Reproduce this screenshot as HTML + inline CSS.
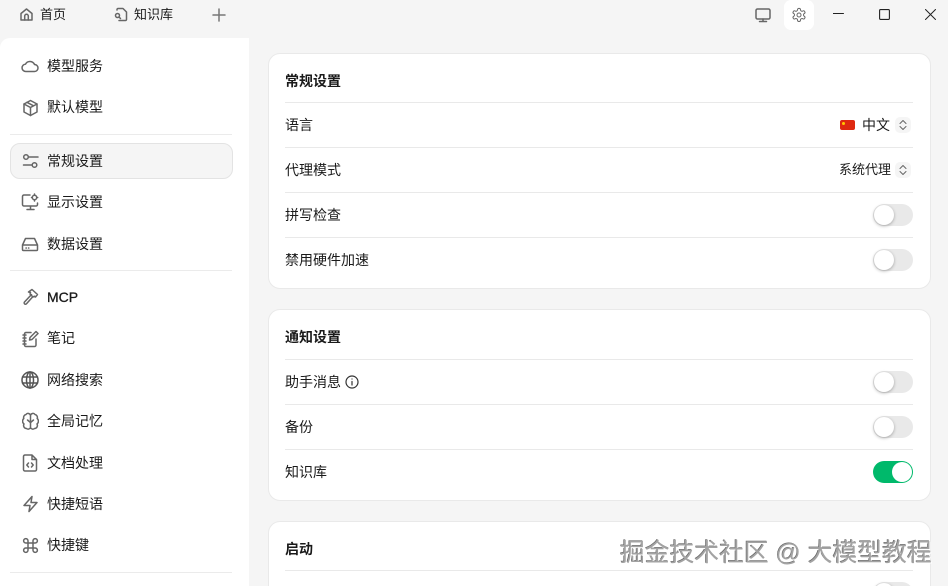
<!DOCTYPE html>
<html lang="zh"><head><meta charset="utf-8"><style>
*{box-sizing:border-box}
html,body{margin:0;padding:0;width:948px;height:586px;overflow:hidden}
body{background:#f5f5f5;font-family:"Liberation Sans","Noto Sans CJK SC",sans-serif;color:#1a1a1a;font-size:14px}
#w{position:absolute;left:0;top:0;width:948px;height:586px;overflow:hidden;contain:paint}
.a{position:absolute;white-space:nowrap;line-height:20px}
svg{position:absolute;fill:none;stroke:#666;stroke-width:1.5;stroke-linecap:round;stroke-linejoin:round}
.side{position:absolute;left:0;top:38px;width:249px;height:548px;background:#fff;border-top-left-radius:10px}
.dv{position:absolute;left:10px;width:222px;height:1px;background:#ebebeb}
.act{position:absolute;left:10px;top:143px;width:223px;height:36px;background:#f5f5f5;border:1px solid #e3e3e3;border-radius:10px}
.card{position:absolute;left:268px;width:663px;background:#fff;border:1px solid #e9e9e9;border-radius:12px}
.ln{position:absolute;left:285px;width:628px;height:1px;background:#e9e9e9}
.b{font-weight:bold}
.sw{position:absolute;left:873px;width:40px;height:22px;background:#e9e9e9;border-radius:11px}
.sw:after{content:"";position:absolute;left:1px;top:1px;width:20px;height:20px;border-radius:50%;background:#fff;box-shadow:0 1px 3px rgba(0,0,0,.3)}
.sw.on{background:#00b96b}
.sw.on:after{left:19px;box-shadow:none}
.sel{position:absolute;left:895px;width:16px;height:16px;background:#f5f5f5;border-radius:5px}
.wm{position:absolute;left:620px;top:538px;font-size:24.8px;line-height:32px;color:#a3a3a3;white-space:nowrap;text-shadow:1px 1px 0 #fff,-.6px -.6px 0 #666}
</style></head><body><div id="w">

<svg style="left:19px;top:7px" width="15" height="15" viewBox="0 0 15 15" stroke-width="1.1"><path d="M2 6.500L7.500 2 13 6.500V13H2z"/><path d="M5.700 13V9a1.800 1.800 0 0 1 3.600 0v4"/></svg>
<div class="a" style="left:40px;top:5px;font-size:13px">首页</div>
<svg style="left:114px;top:7px" width="14" height="15" viewBox="0 0 14 15" stroke-width="1.1"><path d="M3 3V2.500C3 2 3.500 1.500 4 1.500h5L12.500 5v7.500c0 .5-.5 1-1 1H5"/><circle cx="3.500" cy="8.500" r="2"/><path d="M5 10l1.500 1.500"/></svg>
<div class="a" style="left:134px;top:5px;font-size:13px">知识库</div>
<svg style="left:212px;top:8px;stroke:#777" width="14" height="14" viewBox="0 0 14 14"><path d="M7 1v12M1 7h12"/></svg>

<svg style="left:755px;top:7px" width="16" height="16" viewBox="0 0 16 16" stroke-width="1.200"><rect x="1" y="2" width="14" height="10" rx="1.500"/><path d="M8 12v2.500M4.500 14.500h7"/></svg>
<div style="position:absolute;left:784px;top:0;width:30px;height:30px;background:#fff;border-radius:7px"></div>
<svg style="left:791px;top:7px" width="16" height="16" viewBox="0 0 24 24" stroke-width="1.700"><path d="M12.200 2h-.4a2 2 0 0 0-2 2v.2a2 2 0 0 1-1 1.700l-.4.200a2 2 0 0 1-2 0l-.200-.1a2 2 0 0 0-2.700.7l-.2.400a2 2 0 0 0 .7 2.700l.2.100a2 2 0 0 1 1 1.700v.5a2 2 0 0 1-1 1.700l-.2.100a2 2 0 0 0-.7 2.700l.2.400a2 2 0 0 0 2.700.7l.2-.1a2 2 0 0 1 2 0l.4.200a2 2 0 0 1 1 1.700v.2a2 2 0 0 0 2 2h.4a2 2 0 0 0 2-2v-.2a2 2 0 0 1 1-1.700l.4-.2a2 2 0 0 1 2 0l.2.100a2 2 0 0 0 2.700-.7l.2-.4a2 2 0 0 0-.7-2.700l-.2-.1a2 2 0 0 1-1-1.700v-.5a2 2 0 0 1 1-1.700l.2-.1a2 2 0 0 0 .7-2.700l-.2-.4a2 2 0 0 0-2.700-.7l-.2.100a2 2 0 0 1-2 0l-.4-.2a2 2 0 0 1-1-1.700V4a2 2 0 0 0-2-2z"/><circle cx="12" cy="12" r="3"/></svg>
<svg style="left:833px;top:13px;stroke:#222;stroke-width:1" width="11" height="2" viewBox="0 0 11 2"><path d="M0 .5h10.500"/></svg>
<svg style="left:879px;top:9px;stroke:#222;stroke-width:1.100" width="11" height="11" viewBox="0 0 11 11"><rect x=".6" y=".6" width="9.800" height="9.800" rx="1"/></svg>
<svg style="left:925px;top:9px;stroke:#222;stroke-width:1" width="11" height="11" viewBox="0 0 11 11"><path d="M.5.500l10 10M10.500.500l-10 10"/></svg>

<div class="side"></div>
<div class="dv" style="top:134px"></div>
<div class="dv" style="top:270px"></div>
<div class="dv" style="top:572px"></div>
<div class="act"></div>

<svg style="left:21px;top:57px" width="18" height="18" viewBox="0 0 18 18" stroke-width="1.200"><path d="M5 14.500a3.700 3.700 0 0 1-.5-7.400A5 5 0 0 1 13.500 7.500 3.500 3.500 0 0 1 13.500 14.500z"/></svg>
<div class="a" style="left:47px;top:56px">模型服务</div>
<svg style="left:22px;top:99px" width="17" height="18" viewBox="0 0 17 18" stroke-width="1.300"><path d="M8.500 1.500l6.500 3.500v8l-6.500 3.500L2 13V5z"/><path d="M2 5l6.500 3.500L15 5M8.500 8.500v8M5 3.300l6.500 3.500"/></svg>
<div class="a" style="left:47px;top:97px">默认模型</div>

<svg style="left:22px;top:152px" width="17" height="18" viewBox="0 0 17 18" stroke-width="1.300"><circle cx="4" cy="5" r="2.300"/><path d="M6.500 5H16M1.500 13H10"/><circle cx="12.500" cy="13" r="2.300"/></svg>
<div class="a" style="left:47px;top:151px">常规设置</div>
<svg style="left:21px;top:193px" width="18" height="18" viewBox="0 0 18 18" stroke-width="1.300"><path d="M9 2H3a1.500 1.500 0 0 0-1.500 1.500v8A1.500 1.500 0 0 0 3 13h12a1.500 1.500 0 0 0 1.500-1.500V10M9.500 13v3M6 16.500h7"/><circle cx="13.500" cy="4.500" r="2.200"/><path d="M13.500 1v.8M13.500 7.200V8M10.500 4.500h.7M16 4.500h.7"/></svg>
<div class="a" style="left:47px;top:192px">显示设置</div>
<svg style="left:21px;top:235px" width="18" height="18" viewBox="0 0 18 18" stroke-width="1.300"><path d="M1.500 10l3-6.500h9l3 6.500v4.500a1 1 0 0 1-1 1h-13a1 1 0 0 1-1-1zM1.500 10h15M5 13h.3M7.500 13h.3"/></svg>
<div class="a" style="left:47px;top:234px">数据设置</div>

<svg style="left:22px;top:288px" width="17" height="17" viewBox="0 0 17 17" stroke-width="1.300"><path d="M9.500 6.500L2.500 14a1.300 1.300 0 0 0 2 1.800L11 8.500"/><path d="M6.500 4L10 1.500l5.500 5-2 2.500-1-.8-1.500 .8-3-3 .5-1.500z"/></svg>
<div class="a b" style="left:47px;top:287px;font-weight:normal;-webkit-text-stroke:.3px #1a1a1a">MCP</div>
<svg style="left:22px;top:330px" width="17" height="18" viewBox="0 0 17 18" stroke-width="1.300"><path d="M9 2.500H4a1.500 1.500 0 0 0-1.500 1.500v11A1.500 1.500 0 0 0 4 16.500h8.500A1.500 1.500 0 0 0 14 15V9M1 5h3M1 8h3M1 11h3M1 14h3"/><path d="M14 1.500l2 2-6 6-2.500.5.500-2.500z"/></svg>
<div class="a" style="left:47px;top:328px">笔记</div>
<svg style="left:21px;top:371px;stroke:#555" width="18" height="18" viewBox="0 0 18 18" stroke-width="1.200"><circle cx="9" cy="9" r="8"/><ellipse cx="9" cy="9" rx="3.500" ry="8"/><path d="M9 1v16M1.500 6h15M1.500 12h15"/></svg>
<div class="a" style="left:47px;top:370px">网络搜索</div>
<svg style="left:22px;top:412px" width="17" height="19" viewBox="0 0 17 19" stroke-width="1.300"><path d="M8.500 3.500A2.500 2.500 0 0 0 4 2.500 3 3 0 0 0 1.800 6.500 3.500 3.500 0 0 0 2 12a3 3 0 0 0 2.500 4.500 2.500 2.500 0 0 0 4-1V3.500a2.500 2.500 0 0 1 4.500-1 3 3 0 0 1 2.200 4A3.500 3.500 0 0 1 15 12a3 3 0 0 1-2.500 4.500 2.500 2.500 0 0 1-4-1"/><path d="M5.500 8l3 2.500 3-2.500"/></svg>
<div class="a" style="left:47px;top:411px">全局记忆</div>
<svg style="left:22px;top:454px" width="16" height="18" viewBox="0 0 16 18" stroke-width="1.300"><path d="M10 1H3a1.500 1.500 0 0 0-1.500 1.500v13A1.500 1.500 0 0 0 3 17h10a1.500 1.500 0 0 0 1.500-1.500V5.500zM10 1v4.500h4.500M6.500 9L4.800 11l1.700 2M9.500 9l1.700 2-1.700 2"/></svg>
<div class="a" style="left:47px;top:453px">文档处理</div>
<svg style="left:22px;top:495px" width="17" height="18" viewBox="0 0 17 18" stroke-width="1.300"><path d="M10 1.500L2 10.500h6l-1 6 8-9H9z"/></svg>
<div class="a" style="left:47px;top:494px">快捷短语</div>
<svg style="left:22px;top:537px" width="17" height="17" viewBox="0 0 17 17" stroke-width="1.300"><path d="M6 6h5v5H6zM6 6H4a2.200 2.200 0 1 1 2-2zM11 6V4a2.200 2.200 0 1 1 2 2zM11 11h2a2.200 2.200 0 1 1-2 2zM6 11v2a2.200 2.200 0 1 1-2-2z"/></svg>
<div class="a" style="left:47px;top:535px">快捷键</div>

<div class="card" style="top:53px;height:236px"></div>
<div class="a b" style="left:285px;top:71px">常规设置</div>
<div class="ln" style="top:102px"></div>
<div class="a" style="left:285px;top:115px">语言</div>
<div style="position:absolute;left:840px;top:120px;width:15px;height:10px;background:#de2910;border-radius:2px"></div>
<div style="position:absolute;left:842px;top:122px;width:3px;height:3px;background:#ffc800;border-radius:50%"></div>
<div class="a" style="left:862px;top:115px">中文</div>
<div class="sel" style="top:117px"></div>
<svg style="left:898px;top:119px;stroke-width:1" width="10" height="12" viewBox="0 0 10 12"><path d="M2 4.500L5 1.500l3 3M2 7.500l3 3 3-3"/></svg>
<div class="ln" style="top:147px"></div>
<div class="a" style="left:285px;top:160px">代理模式</div>
<div class="a" style="left:839px;top:160px;font-size:13px">系统代理</div>
<div class="sel" style="top:162px"></div>
<svg style="left:898px;top:164px;stroke-width:1" width="10" height="12" viewBox="0 0 10 12"><path d="M2 4.500L5 1.500l3 3M2 7.500l3 3 3-3"/></svg>
<div class="ln" style="top:192px"></div>
<div class="a" style="left:285px;top:205px">拼写检查</div>
<div class="sw" style="top:204px"></div>
<div class="ln" style="top:237px"></div>
<div class="a" style="left:285px;top:250px">禁用硬件加速</div>
<div class="sw" style="top:249px"></div>

<div class="card" style="top:309px;height:192px"></div>
<div class="a b" style="left:285px;top:327px">通知设置</div>
<div class="ln" style="top:359px"></div>
<div class="a" style="left:285px;top:372px">助手消息</div>
<svg style="left:345px;top:375px;stroke:#333;stroke-width:1.200" width="14" height="14" viewBox="0 0 14 14"><circle cx="7" cy="7" r="6"/><path d="M7 6.500V10M7 4h.01"/></svg>
<div class="sw" style="top:371px"></div>
<div class="ln" style="top:404px"></div>
<div class="a" style="left:285px;top:417px">备份</div>
<div class="sw" style="top:416px"></div>
<div class="ln" style="top:449px"></div>
<div class="a" style="left:285px;top:462px">知识库</div>
<div class="sw on" style="top:461px"></div>

<div class="card" style="top:521px;height:90px"></div>
<div class="a b" style="left:285px;top:539px">启动</div>
<div class="ln" style="top:570px"></div>
<div class="sw" style="top:582px"></div>

<div class="wm">掘金技术社区 @ 大模型教程</div>
</div></body></html>
